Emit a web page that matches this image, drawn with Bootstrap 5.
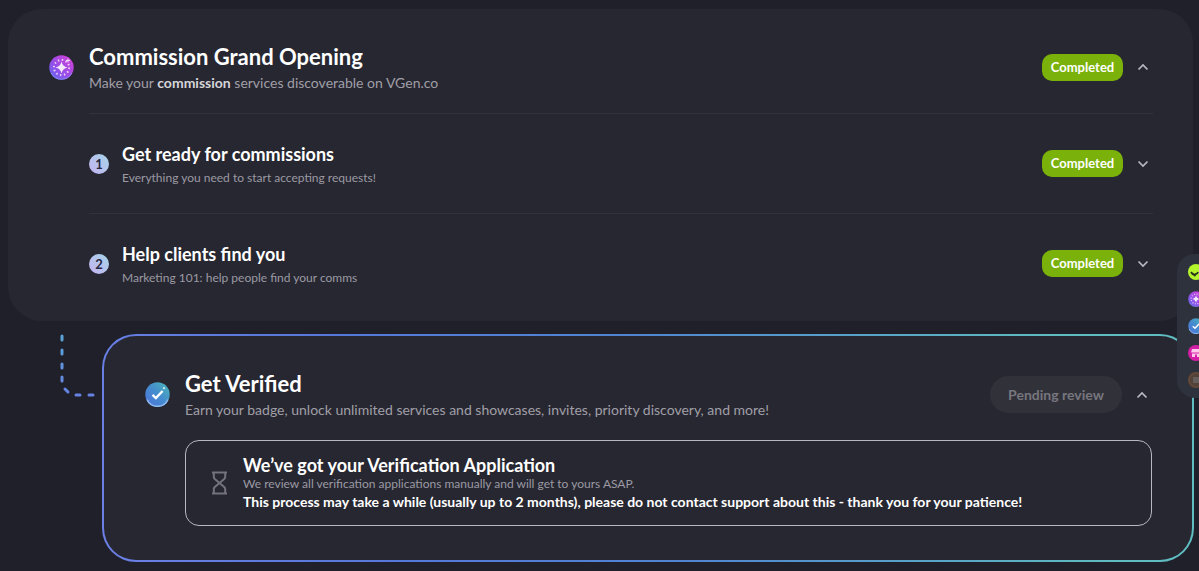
<!DOCTYPE html>
<html lang="en" data-bs-theme="dark">
<head>
<meta charset="utf-8">
<meta name="viewport" content="width=device-width, initial-scale=1">
<title>VGen – Commission Grand Opening</title>
<link href="https://cdn.jsdelivr.net/npm/bootstrap@5.3.0/dist/css/bootstrap.min.css" rel="stylesheet">
<style>
  body { background: #20202b; color: #fff; font-family: Lato, "Liberation Sans", sans-serif; overflow-x: hidden; padding: 9px 6px 9px 8px; }
  h2, h3, h4, p { margin: 0; }
  .panel { background: #272731; border-radius: 34px; }
  .stage { padding: 0 40px 8px 41px; }
  .stage-head { min-height: 104px; padding-top: 12px; gap: 15px; }
  .stage-icon { width: 25px; height: 25px; flex: none; }
  .stage-title { font-size: 22px; line-height: 28px; font-weight: 700; }
  .stage-text { font-size: 14px; line-height: 24px; color: #a09fa7; }
  .stage-text strong { color: #d6d5da; }
  .stage .stage-copy { padding-top: 4px; }
  .steps { margin-left: 40px; }
  .step-row { min-height: 100px; border-top: 1px solid #32323d; gap: 13px; }
  .step-copy { padding-top: 4px; }
  .step-num { width: 20px; height: 20px; flex: none; border-radius: 50%; background: linear-gradient(45deg, #c5b3f3, #a5d3e6); color: #272742; font-size: 13px; line-height: 20px; font-weight: 700; text-align: center; }
  .step-title { font-size: 18px; line-height: 24px; font-weight: 700; }
  .step-text { font-size: 12px; line-height: 24px; color: #9b9aa3; }
  .done { background: #7ab20b; color: #fff; border-radius: 10px; font-size: 13px; line-height: 27px; font-weight: 700; width: 81px; text-align: center; }
  .toggle { width: 20px; height: 24px; padding: 0; line-height: 0; border: 0; color: #b9b8c0; }
  .actions { gap: 10px; }
  .verify-wrap { margin-top: 13px; }
  .link-line { flex: none; width: 40px; height: 66px; margin-left: 52px; }
  .verify { border: 2px solid transparent; border-radius: 34px; margin-left: 2px; margin-right: -1px; padding: 0 40px 34px 41px;
    background: linear-gradient(#272731, #272731) padding-box, linear-gradient(75deg, #6c80e6, #5578da 25%, #5084d2 50%, #5fbcc0 88%) border-box; }
  .verify-head { min-height: 104px; padding-top: 13px; gap: 15px; }
  .verify .stage-copy { padding-top: 2px; }
  .pending, .pending:disabled { width: 132px; height: 37px; padding: 0; border: 0; border-radius: 19px; background: #31313a; color: #77767e; opacity: 1; font-size: 14px; font-weight: 700; }
  .notice { margin-left: 40px; min-height: 86px; border: 1px solid #b9b8c0; border-radius: 14px; padding: 0 26px; gap: 16px; }
  .notice-title { font-size: 18px; line-height: 20px; font-weight: 700; }
  .notice-text { font-size: 12px; line-height: 17px; color: #9b9aa3; }
  .notice-strong { font-size: 14px; line-height: 19px; font-weight: 700; }
  .rail { position: fixed; right: -18px; top: 254px; width: 40px; padding: 10px 0 10px 11px; border-radius: 18px; background: #2e323c; }
  .rail a { display: block; width: 16px; height: 16px; margin-bottom: 11px; line-height: 0; }
  .rail a:last-child { margin-bottom: 0; opacity: .4; }
</style>
</head>
<body>
<svg width="0" height="0" class="position-absolute" aria-hidden="true">
  <defs>
    <linearGradient id="g-spark" x1="0" y1="1" x2="1" y2="0"><stop offset="0" stop-color="#5a6cf0"/><stop offset=".45" stop-color="#9a4ce8"/><stop offset="1" stop-color="#d93fd2"/></linearGradient>
    <linearGradient id="g-check" x1="0" y1="1" x2="1" y2="0"><stop offset="0" stop-color="#4e72dc"/><stop offset=".5" stop-color="#458ccf"/><stop offset="1" stop-color="#4ab8b4"/></linearGradient>
    <linearGradient id="g-line" gradientUnits="userSpaceOnUse" x1="0" y1="0" x2="0" y2="62"><stop offset="0" stop-color="#5aa5d6"/><stop offset="1" stop-color="#6681e4"/></linearGradient>
    <symbol id="i-spark" viewBox="0 0 25 25">
      <circle cx="12.5" cy="12.5" r="12.2" fill="url(#g-spark)"/>
      <path d="M2.2 18a11.6 11.6 0 0 0 20.6 0" fill="none" stroke="#8f9cff" stroke-width="1" opacity=".7"/>
      <path d="M12.5 6.500q1 5 6 6-5 1-6 6-1-5-6-6 5-1 6-6Z" fill="#f3e9fb"/>
      <circle cx="12.5" cy="12.5" r="7.600" fill="none" stroke="#e9cdf6" stroke-width="2" stroke-dasharray="1.5 2.48"/>
      <path d="M19 3.5v4M17 5.5h4" stroke="#f0dcf8" stroke-width="1"/>
    </symbol>
    <symbol id="i-check" viewBox="0 0 25 25">
      <circle cx="12.5" cy="12.5" r="12.2" fill="url(#g-check)"/>
      <path d="M2 17.5a11.5 11.5 0 0 0 21 0" fill="none" stroke="#8fbcf2" stroke-width="1.5"/>
      <path d="m7.500 12.800 3.400 3.300 6.700-7.100" fill="none" stroke="#fff" stroke-width="2.300"/>
      <circle cx="19" cy="6.200" r="1.100" fill="#c3f0ef"/>
    </symbol>
    <symbol id="i-up" viewBox="0 0 12 12"><path d="m1.500 8.500 4.500-4.500 4.500 4.500" fill="none" stroke="currentColor" stroke-width="1.700"/></symbol>
    <symbol id="i-down" viewBox="0 0 12 12"><path d="m1.500 3.500 4.500 4.500 4.500-4.500" fill="none" stroke="currentColor" stroke-width="1.700"/></symbol>
  </defs>
</svg>

<main>
  <section class="panel stage">
    <header class="stage-head d-flex align-items-center">
      <svg class="stage-icon" aria-hidden="true"><use href="#i-spark"/></svg>
      <div class="stage-copy flex-grow-1">
        <h2 class="stage-title">Commission Grand Opening</h2>
        <p class="stage-text">Make your <strong>commission</strong> services discoverable on VGen.co</p>
      </div>
      <div class="actions d-flex align-items-center">
        <span class="done">Completed</span>
        <button type="button" class="btn toggle" aria-label="Collapse Commission Grand Opening"><svg width="12" height="12"><use href="#i-up"/></svg></button>
      </div>
    </header>
    <div class="steps">
      <article class="step-row d-flex align-items-center">
        <span class="step-num">1</span>
        <div class="step-copy flex-grow-1">
          <h3 class="step-title">Get ready for commissions</h3>
          <p class="step-text">Everything you need to start accepting requests!</p>
        </div>
        <div class="actions d-flex align-items-center">
          <span class="done">Completed</span>
          <button type="button" class="btn toggle" aria-label="Expand Get ready for commissions"><svg width="12" height="12"><use href="#i-down"/></svg></button>
        </div>
      </article>
      <article class="step-row d-flex align-items-center">
        <span class="step-num">2</span>
        <div class="step-copy flex-grow-1">
          <h3 class="step-title">Help clients find you</h3>
          <p class="step-text">Marketing 101: help people find your comms</p>
        </div>
        <div class="actions d-flex align-items-center">
          <span class="done">Completed</span>
          <button type="button" class="btn toggle" aria-label="Expand Help clients find you"><svg width="12" height="12"><use href="#i-down"/></svg></button>
        </div>
      </article>
    </div>
  </section>

  <div class="verify-wrap d-flex align-items-start">
    <svg class="link-line" viewBox="0 0 40 66" fill="none" stroke="url(#g-line)" stroke-width="3" stroke-linecap="round" aria-hidden="true">
      <path d="M2 2v4M2 16v4M2 30v4M2 43v4M5 55l3 3M16 61h4M29 61h4"/>
    </svg>
    <section class="verify flex-grow-1">
      <header class="verify-head d-flex align-items-center">
        <svg class="stage-icon" aria-hidden="true"><use href="#i-check"/></svg>
        <div class="stage-copy flex-grow-1">
          <h2 class="stage-title">Get Verified</h2>
          <p class="stage-text">Earn your badge, unlock unlimited services and showcases, invites, priority discovery, and more!</p>
        </div>
        <div class="actions d-flex align-items-center">
          <button type="button" class="btn pending" disabled>Pending review</button>
          <button type="button" class="btn toggle" aria-label="Collapse Get Verified"><svg width="12" height="12"><use href="#i-up"/></svg></button>
        </div>
      </header>
      <div class="notice d-flex align-items-center">
        <svg width="15" height="24" viewBox="0 0 15 24" fill="none" stroke="#74737d" stroke-width="2" class="flex-shrink-0" aria-hidden="true"><path d="M0 1.500h15M0 22.500h15M1.800 1.500v4.500q0 1 1 2l4.700 4 4.700-4q1-1 1-2V1.500M1.800 22.500V18q0-1 1-2l4.700-4 4.700 4q1 1 1 2v4.500"/></svg>
        <div>
          <h3 class="notice-title">We’ve got your Verification Application</h3>
          <p class="notice-text">We review all verification applications manually and will get to yours ASAP.</p>
          <p class="notice-strong">This process may take a while (usually up to 2 months), please do not contact support about this - thank you for your patience!</p>
        </div>
      </div>
    </section>
  </div>
</main>

<nav class="rail" aria-label="Milestones">
  <a href="#" aria-label="Welcome"><svg width="16" height="16" viewBox="0 0 16 16"><circle cx="8" cy="8" r="8" fill="#b4f52c"/><path d="M3 8q1.500 3 4 2.500t3-2.500M4.500 9.500l3 2.500" fill="none" stroke="#27331f" stroke-width="1.800"/></svg></a>
  <a href="#" aria-label="Commission Grand Opening"><svg width="16" height="16"><use href="#i-spark"/></svg></a>
  <a href="#" aria-label="Get Verified"><svg width="16" height="16"><use href="#i-check"/></svg></a>
  <a href="#" aria-label="Shop"><svg width="16" height="16" viewBox="0 0 16 16"><circle cx="8" cy="8" r="8" fill="#d41fa6"/><path d="M4 4h8l1 3.500H3zM4 8.500h8V12H9V9.500H7V12H4z" fill="#ffc9ec"/></svg></a>
  <a href="#" aria-label="Locked milestone"><svg width="16" height="16" viewBox="0 0 16 16"><circle cx="8" cy="8" r="7" fill="#8a5b34" stroke="#b06a35" stroke-width="2"/><path d="M5 5h6v6H5z" fill="#b9a08c"/></svg></a>
</nav>
<script src="https://cdn.jsdelivr.net/npm/bootstrap@5.3.0/dist/js/bootstrap.bundle.min.js"></script>
</body>
</html>
